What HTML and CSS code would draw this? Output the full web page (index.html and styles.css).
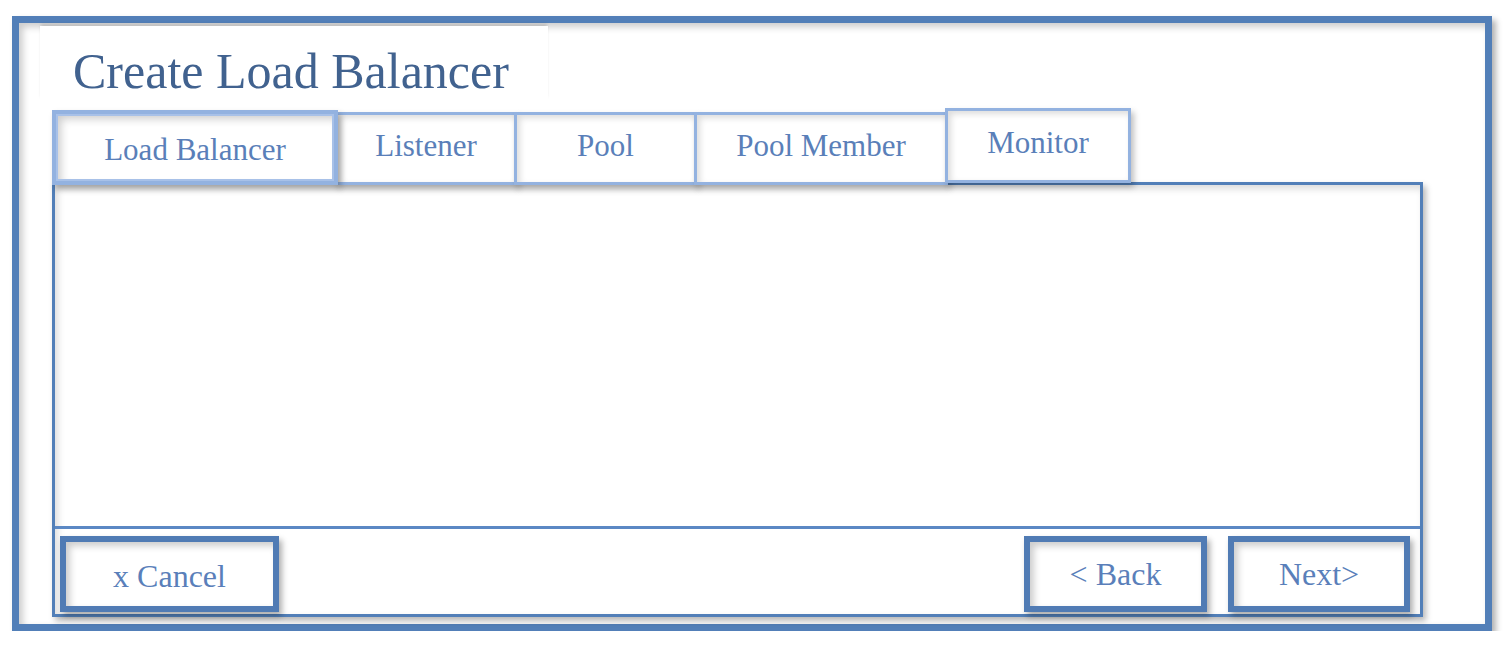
FILE: index.html
```html
<!DOCTYPE html>
<html lang="en">
<head>
<meta charset="utf-8">
<title>Create Load Balancer</title>
<link rel="stylesheet" href="styles.css">
</head>
<body>
<div class="frame">
  <div class="title-box"><h1 class="title">Create Load Balancer</h1></div>
  <div class="wizard">
    <div class="tabs">
      <div class="tab tab-active">Load Balancer</div>
      <div class="tab tab-listener">Listener</div>
      <div class="tab tab-pool">Pool</div>
      <div class="tab tab-member">Pool Member</div>
      <div class="tab tab-monitor">Monitor</div>
    </div>
    <div class="panel">
      <div class="panel-body"></div>
      <div class="panel-footer">
        <div class="btn btn-cancel">x Cancel</div>
        <div class="spacer"></div>
        <div class="btn btn-back">&lt; Back</div>
        <div class="btn btn-next">Next&gt;</div>
      </div>
    </div>
  </div>
</div>
</body>
</html>
```

FILE: styles.css
```css
* { box-sizing: border-box; }
html, body { margin: 0; padding: 0; background: #ffffff; }
body { font-family: "Liberation Serif", "Times New Roman", serif; }

.frame {
  margin: 16px 0 0 12px;
  width: 1480px;
  height: 615px;
  border: 7px solid #527fb8;
  box-shadow: 4px 4px 6px rgba(0,0,0,0.3), inset 4px 4px 7px rgba(0,0,0,0.2);
  display: flex;
  flex-direction: column;
}

.title-box {
  margin: 3px 0 0 21px;
  width: 508px;
  height: 75px;
  background: #ffffff;
  border-top: 3px solid #ffffff;
  box-shadow: 0 -3px 3px -1px rgba(0,0,0,0.14);
  padding: 12px 0 0 33px;
}
.title {
  margin: 0;
  font-weight: normal;
  font-size: 50px;
  line-height: 60px;
  color: #41628f;
  white-space: nowrap;
}

.wizard {
  margin: 7px 0 0 33px;
  width: 1371px;
  display: flex;
  flex-direction: column;
}

.tabs {
  display: flex;
  align-items: flex-end;
  height: 77px;
  margin-bottom: -3px;
  position: relative;
  z-index: 2;
}
.tab {
  background: #ffffff;
  border: 3px solid #93b2e0;
  color: #5a7fb9;
  font-size: 31px;
  line-height: 36px;
  text-align: center;
  white-space: nowrap;
  box-shadow: 3px 4px 6px rgba(0,0,0,0.25), inset 3px 3px 6px rgba(0,0,0,0.14);
}
.tab + .tab { margin-left: -3px; }
.tab-active {
  width: 286px;
  height: 75px;
  border-width: 4px;
  padding-top: 18px;
  box-shadow: 3px 4px 6px rgba(0,0,0,0.28), inset 0 0 0 2px #a8c1e8, inset 5px 5px 8px rgba(0,0,0,0.2);
  position: relative;
  z-index: 1;
}
.tab-listener { width: 182px; height: 73px; padding-top: 13px; }
.tab-pool { width: 183px; height: 73px; padding-top: 13px; }
.tab-member { width: 254px; height: 73px; padding-top: 13px; }
.tab-monitor { width: 186px; height: 75px; padding-top: 14px; margin-bottom: 2px; }

.panel {
  height: 435px;
  border: 3px solid #527fb8;
  box-shadow: 3px 4px 6px rgba(0,0,0,0.28), inset 3px 4px 7px rgba(0,0,0,0.14);
  display: flex;
  flex-direction: column;
  position: relative;
  z-index: 1;
}
.panel-body { flex: 1; }
.panel-footer {
  height: 88px;
  border-top: 3px solid #5b88c4;
  display: flex;
  align-items: flex-start;
  padding: 7px 10px 0 5px;
  gap: 21px;
}
.spacer { flex: 1; }

.btn {
  height: 76px;
  border: 6px solid #507bb4;
  background: #ffffff;
  color: #5a7fba;
  font-size: 32px;
  line-height: 38px;
  display: flex;
  align-items: center;
  justify-content: center;
  white-space: nowrap;
  box-shadow: 3px 4px 6px rgba(0,0,0,0.32), inset 4px 4px 7px rgba(0,0,0,0.2);
}
.btn-cancel { width: 219px; padding-top: 3px; }
.btn-back { width: 183px; }
.btn-next { width: 182px; }
```
